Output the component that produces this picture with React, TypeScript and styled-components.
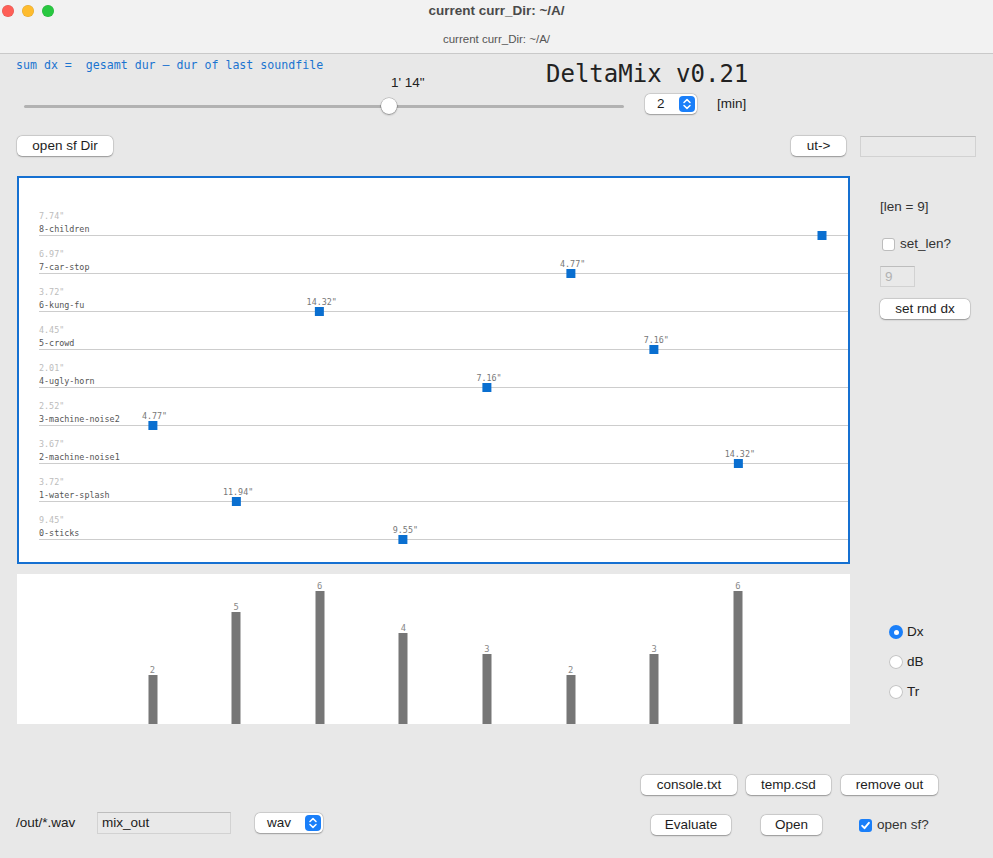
import React from "react";
import styled, { createGlobalStyle } from "styled-components";

const UI = `"Liberation Sans", Arial, sans-serif`;
const MONO = `"DejaVu Sans Mono", "Liberation Mono", monospace`;
const ACCENT = "#1a7ff9";
const FS = "13.5px";

const GlobalStyle = createGlobalStyle`
  html, body { margin: 0; padding: 0; background: #e8e8e8; }
  body { font-family: ${UI}; }
  * { box-sizing: border-box; }
`;

const Window = styled.div`
  width: 993px;
  height: 858px;
  background: #e8e8e8;
  display: flex;
  flex-direction: column;
  overflow: hidden;
  color: #1d1d1d;
`;

/* ---------- title bar ---------- */
const TitleBar = styled.header`
  height: 54px;
  background: #f2f2f2;
  border-bottom: 1px solid #c9c9c9;
  display: grid;
  grid-template-columns: 1fr auto 1fr;
  grid-template-rows: 22px 1fr;
`;
const Lights = styled.div`
  display: flex;
  align-items: center;
  gap: 8px;
  padding-left: 2px;
`;
const Light = styled.span<{ $c: string }>`
  width: 12px;
  height: 12px;
  border-radius: 50%;
  background: ${(p) => p.$c};
  box-shadow: inset 0 0 0 0.5px rgba(0, 0, 0, 0.12);
`;
const WinTitle = styled.div`
  font: 700 13.5px/22px ${UI};
  color: #4a4a4a;
  white-space: nowrap;
`;
const WinSub = styled.div`
  grid-column: 1 / -1;
  text-align: center;
  margin-top: 10px;
  font: 400 11.5px/14px ${UI};
  color: #555;
`;

/* ---------- header ---------- */
const TopRow = styled.div`
  display: grid;
  grid-template-columns: 530px 1fr;
  height: 40px;
`;
const NoteCol = styled.div`
  display: flex;
  flex-direction: column;
  padding-left: 16px;
`;
const Note = styled.div`
  margin-top: 4px;
  font: 11.6px/14px ${MONO};
  color: #1b74d0;
  white-space: pre;
`;
const SliderValue = styled.div`
  margin-top: 3px;
  margin-left: 375px;
  font: ${FS}/16px ${UI};
  color: #222;
`;
const AppTitle = styled.h1`
  margin: 6px 0 0 16px;
  font: 400 24px/28px ${MONO};
  color: #222;
  white-space: nowrap;
`;

const SliderRow = styled.div`
  display: flex;
  align-items: flex-start;
  height: 24px;
  padding-left: 24px;
`;
const Slider = styled.div`
  position: relative;
  width: 600px;
  height: 24px;
  display: flex;
  align-items: center;
`;
const Track = styled.div`
  width: 100%;
  height: 3px;
  border-radius: 2px;
  background: #b2b2b2;
`;
const Thumb = styled.div`
  position: absolute;
  top: 4px;
  width: 16px;
  height: 16px;
  margin-left: -8px;
  border-radius: 50%;
  background: #fff;
  box-shadow: 0 0 0 0.5px rgba(0, 0, 0, 0.28), 0 1px 2px rgba(0, 0, 0, 0.3);
`;

const PopUp = styled.div<{ $w: number; $ml: number }>`
  margin-left: ${(p) => p.$ml}px;
  width: ${(p) => p.$w}px;
  height: 20px;
  flex: none;
  background: #fff;
  border-radius: 5px;
  box-shadow: 0 0 0 0.5px rgba(0, 0, 0, 0.14), 0 0.5px 1.5px rgba(0, 0, 0, 0.28);
  display: flex;
  align-items: center;
  justify-content: space-between;
  padding: 0 2px 0 12px;
  font: ${FS}/20px ${UI};
  color: #1d1d1d;
`;
const Unit = styled.span`
  margin-left: 20px;
  font: ${FS}/20px ${UI};
  color: #222;
`;

const Stepper = () => (
  <svg width="16" height="16" viewBox="0 0 16 16">
    <rect x="0" y="0" width="16" height="16" rx="4" fill={ACCENT} />
    <path d="M5 6.5 L8 3.6 L11 6.5" fill="none" stroke="#fff" strokeWidth="1.5" strokeLinecap="round" strokeLinejoin="round" />
    <path d="M5 9.5 L8 12.4 L11 9.5" fill="none" stroke="#fff" strokeWidth="1.5" strokeLinecap="round" strokeLinejoin="round" />
  </svg>
);

const ButtonRow = styled.div`
  margin-top: 18px;
  height: 20px;
  display: flex;
  align-items: center;
  padding: 0 17px;
`;
const Button = styled.button<{ $w: number }>`
  width: ${(p) => p.$w}px;
  height: 20px;
  flex: none;
  padding: 0;
  border: none;
  border-radius: 5px;
  background: #fff;
  box-shadow: 0 0 0 0.5px rgba(0, 0, 0, 0.14), 0 0.5px 1.5px rgba(0, 0, 0, 0.3);
  font: ${FS}/20px ${UI};
  color: #1d1d1d;
  text-align: center;
`;
const Spacer = styled.div`
  flex: 1;
`;
const Field = styled.div<{ $w: number; $h: number; $muted?: boolean }>`
  width: ${(p) => p.$w}px;
  height: ${(p) => p.$h}px;
  flex: none;
  background: #e9e9e9;
  border: 1px solid #d2d2d2;
  border-top-color: #bdbdbd;
  padding-left: 4px;
  font: ${FS}/${(p) => p.$h - 2}px ${UI};
  color: ${(p) => (p.$muted ? "#b2b2b2" : "#1d1d1d")};
`;

/* ---------- workspace ---------- */
const Workspace = styled.div`
  margin-top: 20px;
  display: grid;
  grid-template-columns: 833px 1fr;
  grid-template-rows: 388px 150px;
  row-gap: 10px;
  padding-left: 17px;
`;
const Panel = styled.div`
  background: #fff;
  border: 2px solid #1570d1;
  padding-top: 20px;
  display: flex;
  flex-direction: column;
`;
const Lane = styled.div`
  position: relative;
  height: 38px;
  margin-left: 20px;
  border-bottom: 1px solid #cdcdcd;
  display: flex;
  flex-direction: column;
  justify-content: flex-end;
  font-family: ${MONO};
  font-size: 8.4px;
`;
const LaneDur = styled.div`
  line-height: 13px;
  color: #bcbcbc;
`;
const LaneName = styled.div`
  line-height: 12px;
  color: #555;
`;
const Marker = styled.div`
  position: absolute;
  bottom: -5px;
  transform: translateX(-50%);
  display: flex;
  flex-direction: column;
  align-items: center;
`;
const MarkerLabel = styled.div`
  line-height: 10px;
  color: #777;
  white-space: nowrap;
  transform: translateX(2px);
`;
const Dot = styled.div`
  width: 9px;
  height: 9px;
  background: #0a6fd0;
`;

const SidePanel = styled.div`
  padding-left: 30px;
  display: flex;
  flex-direction: column;
  align-items: flex-start;
`;
const LenLabel = styled.div`
  margin-top: 23px;
  font: ${FS}/16px ${UI};
  color: #333;
`;
const CheckRow = styled.label<{ $mt: number }>`
  margin-top: ${(p) => p.$mt}px;
  height: 16px;
  display: flex;
  align-items: center;
  gap: 5px;
  padding-left: 2px;
  font: ${FS}/16px ${UI};
  color: #333;
`;
const Box = styled.span<{ $on?: boolean }>`
  width: 13px;
  height: 13px;
  border-radius: 3px;
  flex: none;
  display: flex;
  align-items: center;
  justify-content: center;
  background: ${(p) => (p.$on ? ACCENT : "#fff")};
  box-shadow: ${(p) => (p.$on ? "none" : "inset 0 0 0 1px #bdbdbd")};
`;
const Stack = styled.div<{ $mt: number }>`
  margin-top: ${(p) => p.$mt}px;
`;

const Chart = styled.div`
  position: relative;
  background: #fff;
`;
const BarCol = styled.div`
  position: absolute;
  bottom: 0;
  transform: translateX(-50%);
  display: flex;
  flex-direction: column;
  align-items: center;
  font: 8.8px/10px ${MONO};
  color: #888;
`;
const Bar = styled.div`
  width: 9px;
  background: #767676;
`;
const RadioGroup = styled.div`
  margin-top: 51px;
  padding-left: 39px;
  display: flex;
  flex-direction: column;
  gap: 16px;
`;
const RadioRow = styled.div`
  height: 14px;
  display: flex;
  align-items: center;
  gap: 4px;
  font: ${FS}/14px ${UI};
  color: #222;
`;
const RadioDot = styled.span<{ $on?: boolean }>`
  width: 14px;
  height: 14px;
  border-radius: 50%;
  flex: none;
  display: flex;
  align-items: center;
  justify-content: center;
  background: ${(p) => (p.$on ? ACCENT : "#fff")};
  box-shadow: ${(p) => (p.$on ? "none" : "inset 0 0 0 1px #c4c4c4")};
  &::after {
    content: "";
    width: 5px;
    height: 5px;
    border-radius: 50%;
    background: ${(p) => (p.$on ? "#fff" : "transparent")};
  }
`;

/* ---------- footer ---------- */
const Footer = styled.div`
  margin-top: 51px;
  height: 60px;
  display: flex;
  align-items: flex-end;
  justify-content: space-between;
  padding-right: 55px;
`;
const OutGroup = styled.div`
  height: 24px;
  display: flex;
  align-items: center;
  padding-left: 16px;
`;
const OutLabel = styled.span`
  width: 81px;
  font: ${FS}/16px ${UI};
  color: #222;
`;
const Actions = styled.div`
  display: flex;
  flex-direction: column;
  gap: 20px;
`;
const ActionRow = styled.div<{ $pl?: number }>`
  display: flex;
  align-items: center;
  padding-left: ${(p) => p.$pl ?? 0}px;
`;
const Gap = styled.span<{ $w: number }>`
  width: ${(p) => p.$w}px;
  flex: none;
`;

const Check = () => (
  <svg width="11" height="11" viewBox="0 0 11 11">
    <path d="M2.2 5.8 L4.5 8.2 L8.9 2.8" fill="none" stroke="#fff" strokeWidth="1.9" strokeLinecap="round" strokeLinejoin="round" />
  </svg>
);

const lanes = [
  { n: "8-children", d: '7.74"', i: 8, v: "" },
  { n: "7-car-stop", d: '6.97"', i: 5, v: '4.77"' },
  { n: "6-kung-fu", d: '3.72"', i: 2, v: '14.32"' },
  { n: "5-crowd", d: '4.45"', i: 6, v: '7.16"' },
  { n: "4-ugly-horn", d: '2.01"', i: 4, v: '7.16"' },
  { n: "3-machine-noise2", d: '2.52"', i: 0, v: '4.77"' },
  { n: "2-machine-noise1", d: '3.67"', i: 7, v: '14.32"' },
  { n: "1-water-splash", d: '3.72"', i: 1, v: '11.94"' },
  { n: "0-sticks", d: '9.45"', i: 3, v: '9.55"' },
];
const bars = [2, 5, 6, 4, 3, 2, 3, 6];
const STEP = 83.625;

export default function App() {
  return (
    <Window>
      <GlobalStyle />
      <TitleBar>
        <Lights>
          <Light $c="#fe5f57" />
          <Light $c="#febc2e" />
          <Light $c="#28c840" />
        </Lights>
        <WinTitle>current curr_Dir: ~/A/</WinTitle>
        <div />
        <WinSub>current curr_Dir: ~/A/</WinSub>
      </TitleBar>

      <TopRow>
        <NoteCol>
          <Note>sum dx =  gesamt dur – dur of last soundfile</Note>
          <SliderValue>1' 14"</SliderValue>
        </NoteCol>
        <AppTitle>DeltaMix v0.21</AppTitle>
      </TopRow>

      <SliderRow>
        <Slider>
          <Track />
          <Thumb style={{ left: `${(365 / 600) * 100}%` }} />
        </Slider>
        <PopUp $w={52} $ml={21}>
          <span>2</span>
          <Stepper />
        </PopUp>
        <Unit>[min]</Unit>
      </SliderRow>

      <ButtonRow>
        <Button $w={96}>open sf Dir</Button>
        <Spacer />
        <Button $w={55}>ut-&gt;</Button>
        <Gap $w={14} />
        <Field $w={116} $h={21} />
      </ButtonRow>

      <Workspace>
        <Panel>
          {lanes.map((l) => (
            <Lane key={l.n}>
              <LaneDur>{l.d}</LaneDur>
              <LaneName>{l.n}</LaneName>
              <Marker style={{ left: 113.5 + STEP * l.i }}>
                {l.v && <MarkerLabel>{l.v}</MarkerLabel>}
                <Dot />
              </Marker>
            </Lane>
          ))}
        </Panel>
        <SidePanel>
          <LenLabel>[len = 9]</LenLabel>
          <CheckRow $mt={21}>
            <Box />
            set_len?
          </CheckRow>
          <Stack $mt={14}>
            <Field $w={35} $h={21} $muted>
              9
            </Field>
          </Stack>
          <Stack $mt={12}>
            <Button $w={90}>set rnd dx</Button>
          </Stack>
        </SidePanel>

        <Chart>
          {bars.map((v, i) => (
            <BarCol key={i} style={{ left: 135.5 + STEP * i }}>
              <span>{v}</span>
              <Bar style={{ height: 21 * v + 7 }} />
            </BarCol>
          ))}
        </Chart>
        <div>
          <RadioGroup>
            <RadioRow>
              <RadioDot $on />
              Dx
            </RadioRow>
            <RadioRow>
              <RadioDot />
              dB
            </RadioRow>
            <RadioRow>
              <RadioDot />
              Tr
            </RadioRow>
          </RadioGroup>
        </div>
      </Workspace>

      <Footer>
        <OutGroup>
          <OutLabel>/out/*.wav</OutLabel>
          <Field $w={134} $h={22}>
            mix_out
          </Field>
          <PopUp $w={68} $ml={24}>
            <span>wav</span>
            <Stepper />
          </PopUp>
        </OutGroup>
        <Actions>
          <ActionRow>
            <Button $w={96}>console.txt</Button>
            <Gap $w={9} />
            <Button $w={85}>temp.csd</Button>
            <Gap $w={10} />
            <Button $w={97}>remove out</Button>
          </ActionRow>
          <ActionRow $pl={10}>
            <Button $w={80}>Evaluate</Button>
            <Gap $w={30} />
            <Button $w={61}>Open</Button>
            <Gap $w={37} />
            <CheckRow $mt={0} style={{ paddingLeft: 0 }}>
              <Box $on>
                <Check />
              </Box>
              open sf?
            </CheckRow>
          </ActionRow>
        </Actions>
      </Footer>
    </Window>
  );
}
